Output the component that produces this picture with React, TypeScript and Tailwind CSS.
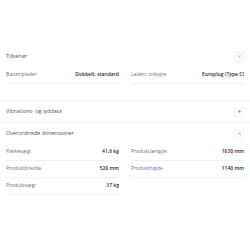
import { Plus, X } from 'lucide-react';

type Spec = { label: string; value: string };

const font = { fontFamily: '"Open Sans", "Liberation Sans", sans-serif' };

function SpecRow({ label, value }: Spec) {
  return (
    <div className="flex items-center justify-between h-[17px] border-b border-[#f0f0f0]">
      <span className="text-[5px] text-[#6b7280]">{label}</span>
      <span className="text-[5px] font-semibold text-[#1f2937]">{value}</span>
    </div>
  );
}

function Section({
  title,
  open,
  last = false,
  left = [],
  right = [],
}: {
  title: string;
  open: boolean;
  last?: boolean;
  left?: Spec[];
  right?: Spec[];
}) {
  return (
    <div className={last ? '' : 'border-b border-[#f0f0f0]'}>
      <div className="flex items-center justify-between h-[21px] px-[6px]">
        <span className="text-[5.5px] text-[#4b5563]">{title}</span>
        <span className="w-[10px] h-[10px] flex items-center justify-center border border-[#f0f1f4] rounded-[1px] bg-white">
          {open ? (
            <X size={5} strokeWidth={2} className="text-[#64748b]" />
          ) : (
            <Plus size={5} strokeWidth={2.5} className="text-[#64748b]" />
          )}
        </span>
      </div>
      {open && (
        <div className="grid grid-cols-2 gap-x-[12px] px-[6px] pb-[16px]">
          <div className="flex flex-col">
            {left.map((s) => (
              <SpecRow key={s.label} {...s} />
            ))}
          </div>
          <div className="flex flex-col">
            {right.map((s) => (
              <SpecRow key={s.label} {...s} />
            ))}
          </div>
        </div>
      )}
    </div>
  );
}

export default function App() {
  return (
    <div className="w-[250px] h-[250px] bg-white pt-[46px]" style={font}>
      <Section
        title="Tilbehør"
        open
        left={[{ label: 'Batteriplader', value: 'Dobbelt, standard' }]}
        right={[{ label: 'Laders stiktype', value: 'Europlug (Type C)' }]}
      />
      <Section title="Vibrations- og lyddata" open={false} />
      <Section
        title="Overordnede dimensioner"
        open
        last
        left={[
          { label: 'Pakkevægt', value: '41.6 kg' },
          { label: 'Produktbredde', value: '520 mm' },
          { label: 'Produktvægt', value: '37 kg' },
        ]}
        right={[
          { label: 'Produktlængde', value: '1630 mm' },
          { label: 'Produkthøjde', value: '1140 mm' },
        ]}
      />
    </div>
  );
}
